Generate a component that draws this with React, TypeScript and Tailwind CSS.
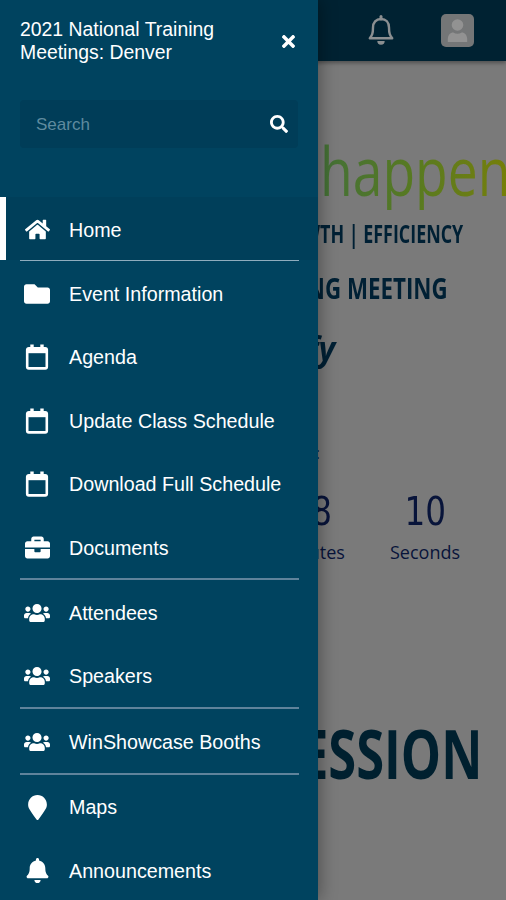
import React from 'react';
import { FaBell, FaBriefcase, FaFolder, FaHome, FaMapMarker, FaSearch, FaTimes, FaUsers } from 'react-icons/fa';

const CalendarIcon: React.FC = () => (
  <svg viewBox="0 0 24 26" className="w-6 h-[26px]" fill="none">
    <path d="M7 0.4v5M17 0.4v5" stroke="white" strokeWidth="3.4" />
    <rect x="2.2" y="4.2" width="19.6" height="20.2" rx="1.6" stroke="white" strokeWidth="2.6" />
    <path d="M2 4.4h20v4.8H2z" fill="white" />
  </svg>
);

interface MenuItem {
  label: string;
  icon: React.ReactNode;
  active?: boolean;
  divider?: string;
}

const items: MenuItem[] = [
  { label: 'Home', icon: <FaHome size={25} />, active: true, divider: 'h-px bg-[#8fadbe]' },
  { label: 'Event Information', icon: <FaFolder size={26} /> },
  { label: 'Agenda', icon: <CalendarIcon /> },
  { label: 'Update Class Schedule', icon: <CalendarIcon /> },
  { label: 'Download Full Schedule', icon: <CalendarIcon /> },
  { label: 'Documents', icon: <FaBriefcase size={25} />, divider: 'h-[2px] bg-[#5f839b]' },
  { label: 'Attendees', icon: <FaUsers size={26} /> },
  { label: 'Speakers', icon: <FaUsers size={26} />, divider: 'h-[2px] bg-[#5f839b]' },
  { label: 'WinShowcase Booths', icon: <FaUsers size={26} />, divider: 'h-[2px] bg-[#5f839b]' },
  { label: 'Maps', icon: <FaMapMarker size={25} /> },
  { label: 'Announcements', icon: <FaBell size={25} /> },
];

const Drawer: React.FC = () => (
  <aside className="absolute inset-y-0 left-0 w-[318px] bg-[#00435f] text-white flex flex-col shadow-[2px_0_16px_rgba(0,0,0,0.35)]">
    <div className="shrink-0 flex items-center justify-between px-5 pt-[18px]">
      <h1 className="text-[19.4px] leading-[23px]">
        2021 National Training
        <br />
        Meetings: Denver
      </h1>
      <FaTimes size={19} />
    </div>

    <div className="shrink-0 mx-5 mt-9 h-12 rounded-sm bg-[#003d58] flex items-center justify-between pl-4 pr-[10px]">
      <span className="pt-px text-[17px] text-[#5f8b9f]">Search</span>
      <FaSearch size={18} />
    </div>

    <nav className="shrink-0 mt-[49px]">
      {items.map((item) => (
        <div key={item.label}>
          <div
            className={`h-[63.4px] flex items-center pl-[18px] pt-[2px] ${
              item.active ? 'bg-[#003f5a] border-l-[6px] border-white' : 'border-l-[6px] border-transparent'
            }`}
          >
            <span className="w-[26px] flex justify-center">{item.icon}</span>
            <span className="ml-[19px] text-[19.7px] leading-6 whitespace-nowrap">{item.label}</span>
          </div>
          {item.divider && <div className={`ml-5 mr-[19px] ${item.divider}`} />}
        </div>
      ))}
    </nav>
  </aside>
);

const Page: React.FC = () => (
  <div className="h-full flex flex-col bg-[#7a7a7a] text-[#002034] font-['Open_Sans','Noto_Sans',sans-serif]">
    <header className="h-[61px] shrink-0 bg-[#002232] flex items-center justify-end pr-8 shadow-[0_2px_4px_rgba(0,0,0,0.35)]">
      <svg viewBox="0 0 28 32" className="w-7 h-8 mr-[46px]" fill="none">
        <path d="M14 4c-5 0-8 3.6-8 8.6 0 6.2-1 7.8-3.2 10.6h22.4C23 20.4 22 18.8 22 12.6 22 7.600 19 4 14 4z" stroke="#8b8f91" strokeWidth="2.4" strokeLinejoin="round" />
        <path d="M14 1.6v2.4" stroke="#8b8f91" strokeWidth="3" strokeLinecap="round" />
        <path d="M10.3 26h7.4a3.7 3.7 0 0 1-7.4 0z" fill="#8b8f91" />
      </svg>
      <svg viewBox="0 0 33 33" className="w-[33px] h-[33px]">
        <rect width="33" height="33" rx="5" fill="#747677" />
        <circle cx="16.5" cy="11" r="5.8" fill="#929292" />
        <path d="M6.8 28v-3c0-4 2.6-6.6 5.4-6.6 1.4.9 2.8 1.300 4.300 1.300s2.900-.4 4.300-1.300c2.800 0 5.400 2.600 5.400 6.600v3z" fill="#929292" />
      </svg>
    </header>

    <section className="pl-[320px] flex flex-col items-start whitespace-nowrap">
      <div className="mt-[69px] h-[80px] text-[68px] leading-[80px] origin-left scale-x-[0.785] bg-gradient-to-r from-[#437036] via-[#587a20] to-[#767f06] bg-clip-text text-transparent">
        happen
      </div>
    </section>

    <section className="flex flex-col items-end whitespace-nowrap font-bold">
      <div className="mt-[10px] mr-[43px] text-[24.5px] leading-[28px] origin-right scale-x-[0.73]">GROWTH | EFFICIENCY</div>
      <div className="mt-[24px] mr-[58px] text-[29px] leading-[32px] origin-right scale-x-[0.77]">TRAINING MEETING</div>
      <div className="mt-[24px] mr-[171px] text-[34px] leading-[40px] italic origin-right scale-x-[0.95]">fy</div>
    </section>

    <div className="mt-[73px] mr-[186px] self-end text-[17px] leading-[24px] text-[#08143a]">:</div>

    <section className="mt-[25px] flex justify-end gap-[12px] text-[#08143a]">
      <div className="w-[102px] flex flex-col items-center">
        <span className="text-[39px] leading-[44px] font-['DejaVu_Sans_Condensed','DejaVu_Sans',sans-serif] [font-stretch:condensed] scale-x-[0.93]">38</span>
        <span className="mt-[6px] text-[18px] leading-[24px]">Minutes</span>
      </div>
      <div className="w-[102px] mr-[30px] flex flex-col items-center">
        <span className="text-[39px] leading-[44px] font-['DejaVu_Sans_Condensed','DejaVu_Sans',sans-serif] [font-stretch:condensed] scale-x-[0.93]">10</span>
        <span className="mt-[6px] text-[18px] leading-[24px]">Seconds</span>
      </div>
    </section>

    <div className="mt-[149px] mr-[24px] self-end text-[68px] leading-[80px] font-bold text-[#00202f] whitespace-nowrap origin-right scale-x-[0.745]">
      SESSION
    </div>
  </div>
);

export default function App() {
  return (
    <div className="relative w-[506px] h-[900px] overflow-hidden font-['Liberation_Sans',Arial,sans-serif]">
      <Page />
      <Drawer />
    </div>
  );
}
